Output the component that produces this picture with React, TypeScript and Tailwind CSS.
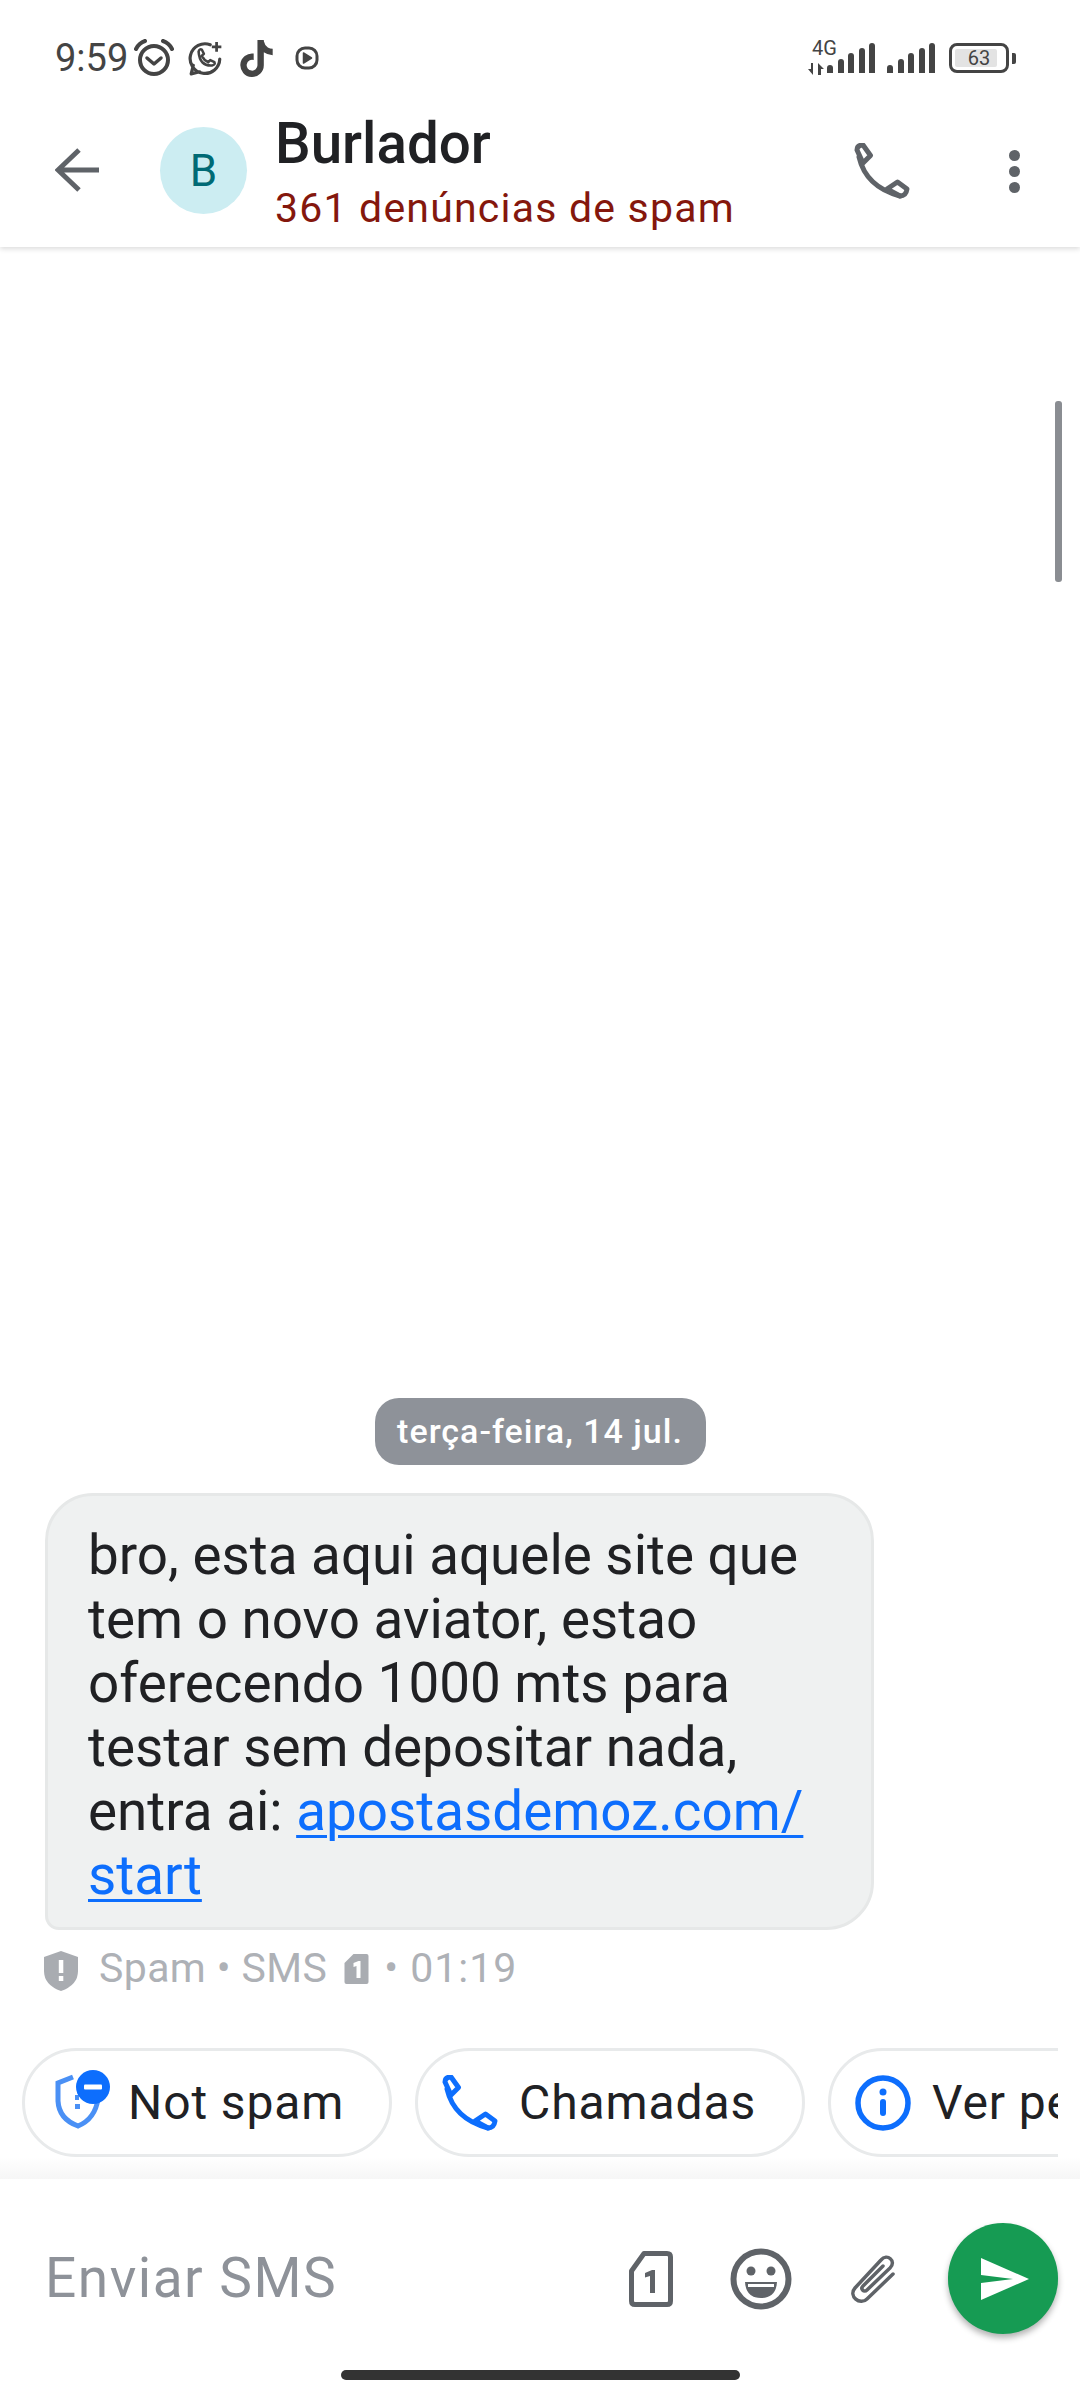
import React from "react";
import { FaTiktok } from "react-icons/fa6";

function Handset({ color, className }: { color: string; className: string }) {
  return (
    <svg viewBox="0 0 56 56" className={className} fill="none" stroke={color} strokeWidth="5" strokeLinejoin="round" strokeLinecap="round">
      <path d="M3 7Q3 2 9 2L16.5 12.5L9 20Z" />
      <path d="M5 14Q12 44 46 53" />
      <path d="M33 46L43.5 39L53 46Q52 53 46 53Z" />
    </svg>
  );
}

function StatusIcons() {
  return (
    <div className="flex items-center">
      <svg viewBox="0 0 40 38" className="w-[40px] h-[38px] ml-[6px] shrink-0" fill="none" stroke="#444" strokeWidth="4">
        <circle cx="20" cy="21" r="14" />
        <path d="M13 19l7 6 7-6" strokeWidth="3.5" strokeLinecap="round" strokeLinejoin="round" />
        <path d="M2 10Q5 4 11 2M38 10Q35 4 29 2" strokeLinecap="round" />
      </svg>
      <svg viewBox="0 0 34 34" className="w-[36px] h-[36px] ml-[14px] shrink-0" fill="none" stroke="#444" strokeWidth="3">
        <path d="M21 4.5A14 14 0 1 0 30 18M3 32l2-8M3 32l8-2" strokeLinecap="round" />
        <path d="M10 11q1-3 3-2l2 4-2 2q2 4 6 6l2-2 4 2q1 2-2 3-12 1-13-13Z" strokeWidth="2.4" strokeLinejoin="round" />
        <path d="M27 2v9M22.500 6.500h9" strokeWidth="2.600" />
      </svg>
      <FaTiktok className="w-[33px] h-[37px] ml-[16px] text-[#444] shrink-0" />
      <svg viewBox="0 0 24 24" className="w-[24px] h-[26px] ml-[22px] shrink-0" fill="none" stroke="#444" strokeWidth="3">
        <rect x="2" y="2" width="20" height="20" rx="8" />
        <path d="M8.500 7l8 5-8 5Z" fill="#444" strokeWidth="1.500" strokeLinejoin="round" />
      </svg>
    </div>
  );
}

function Bars({ heights }: { heights: number[] }) {
  return (
    <div className="flex items-end gap-[4.5px] h-[30px]">
      {heights.map((h, i) => (
        <div key={i} className="w-[6px] bg-[#444] rounded-t-[3px]" style={{ height: h }} />
      ))}
    </div>
  );
}

function Chip({ icon, label, className }: { icon: React.ReactNode; label: string; className: string }) {
  return (
    <div className={"shrink-0 h-[109px] rounded-full border-[3px] border-[#e8eaeb] flex items-center text-[48px] text-[#202124] tracking-[0.9px] " + className}>
      {icon}
      <span className="whitespace-nowrap">{label}</span>
    </div>
  );
}

export default function App() {
  return (
    <div className="relative w-[1080px] h-[2400px] bg-white overflow-hidden flex flex-col font-['Roboto',sans-serif]">
      <header className="h-[247px] shrink-0 flex flex-col bg-white shadow-[0_2px_5px_rgba(0,0,0,0.14)] z-10">
        <div className="h-[76px] pt-[40px] pl-[55px] pr-[64px] flex items-center justify-between">
          <div className="flex items-center">
            <span className="text-[38px] text-[#444] leading-none">9:59</span>
            <StatusIcons />
          </div>
          <div className="flex items-center">
            <div className="relative w-[19px] h-[34px] self-end">
              <span className="absolute left-[4px] -top-[3px] text-[20px] leading-none text-[#444]">4G</span>
              <svg viewBox="0 0 18 12" className="absolute left-0 bottom-0 w-[18px] h-[12px]" fill="#444">
                <path d="M0 6h3V0h2v12ZM10 12V0l6 6h-3v6Z" />
              </svg>
            </div>
            <Bars heights={[8, 14, 20, 25, 30]} />
            <div className="w-[12px]" />
            <Bars heights={[8, 14, 20, 25, 30]} />
            <div className="ml-[14px] w-[60px] h-[30px] rounded-[8px] border-[3px] border-[#444] p-[3px] relative">
              <div className="h-full w-[42px] bg-[#e3e3e3] rounded-[2px]" />
              <span className="absolute inset-0 flex items-center justify-center text-[20px] text-[#444] leading-none">63</span>
            </div>
            <div className="ml-[3px] w-[4px] h-[11px] bg-[#444] rounded-r-[2px]" />
          </div>
        </div>
        <div className="flex-1 flex items-start pl-[55px] pr-[60px] relative">
          <svg viewBox="0 0 44 44" className="w-[44px] h-[44px] mt-[72px] shrink-0" fill="none" stroke="#5f6368" strokeWidth="5">
            <path d="M44 22H4M24 2L3 22l21 20" />
          </svg>
          <div className="ml-[61px] mt-[51px] w-[87px] h-[87px] shrink-0 rounded-full bg-[#ccedf2] flex items-center justify-center text-[44px] text-[#006a75]">B</div>
          <div className="ml-[28px] flex flex-col">
            <span className="text-[56.5px] leading-[58px] mt-[39px] font-medium text-[#202124]">Burlador</span>
            <span className="text-[41px] leading-[46px] mt-[12px] text-[#84170d] tracking-[1.2px] whitespace-nowrap">361 denúncias de spam</span>
          </div>
          <div className="ml-auto flex items-center mt-[67px]">
            <Handset color="#5f6368" className="w-[56px] h-[56px] shrink-0" />
            <div className="ml-[99px] flex flex-col gap-[5px]">
              <div className="w-[11px] h-[11px] rounded-full bg-[#5f6368]" />
              <div className="w-[11px] h-[11px] rounded-full bg-[#5f6368]" />
              <div className="w-[11px] h-[11px] rounded-full bg-[#5f6368]" />
            </div>
          </div>
        </div>
      </header>

      <main className="flex-1 flex flex-col justify-end">
        <div className="self-center h-[67px] w-[331px] rounded-[24px] bg-[#8e9299] flex items-center justify-center text-[34px] font-medium text-white tracking-[1px] whitespace-nowrap">
          terça-feira, 14 jul.
        </div>
        <div className="mt-[28px] ml-[45px] w-[829px] h-[437px] rounded-[48px] rounded-bl-[14px] border-[3px] border-[#e6e8e8] bg-[#eff1f1] pl-[40px] pt-[27px] text-[54.8px] leading-[64px] text-[#202124] whitespace-nowrap">
          bro, esta aqui aquele site que<br />
          tem o novo aviator, estao<br />
          oferecendo 1000 mts para<br />
          testar sem depositar nada,<br />
          entra ai: <span className="text-[#0d6efd] underline decoration-[3px] underline-offset-[5px]">apostasdemoz.com/</span><br />
          <span className="text-[#0d6efd] underline decoration-[3px] underline-offset-[5px]">start</span>
        </div>
        <div className="mt-[21px] ml-[44px] h-[40px] flex items-center text-[41px] text-[#aeb1b6] tracking-[0.4px]">
          <svg viewBox="0 0 34 40" className="w-[34px] h-[40px] shrink-0">
            <path d="M17 0L34 6V20Q34 34 17 40Q0 34 0 20V6Z" fill="#a9acb1" />
            <rect x="14.800" y="9" width="4.500" height="13" fill="#fff" />
            <rect x="14.800" y="25" width="4.500" height="5" fill="#fff" />
          </svg>
          <span className="ml-[21px] pb-[5px]">Spam • SMS</span>
          <svg viewBox="0 0 24 30" className="w-[25px] h-[30px] ml-[17px] mb-[5px] shrink-0">
            <path d="M9 0H22Q24 0 24 2V28Q24 30 22 30H2Q0 30 0 28V9Z" fill="#a9acb1" />
            <path d="M9 9l5-2h2v17h-4V12l-3 1Z" fill="#fff" />
          </svg>
          <span className="ml-[15px] pb-[5px] tracking-[1px]">• 01:19</span>
        </div>
        <div className="mt-[57px] ml-[22px] w-[1036px] overflow-hidden flex gap-[23px]">
          <Chip
            className="w-[370px] pl-[30px]"
            label="Not spam"
            icon={
              <svg viewBox="0 0 56 60" className="w-[56px] h-[60px] mr-[17px] -mt-[6px] shrink-0" fill="none">
                <path d="M18 7L3 13V31Q4 49 23 56Q40 49 43 29" stroke="#4a90f5" strokeWidth="5" />
                <rect x="20" y="34" width="5" height="5" fill="#4a90f5" />
                <rect x="20" y="25" width="4" height="5" fill="#4a90f5" />
                <circle cx="38" cy="17" r="17" fill="#0d6efd" />
                <rect x="29" y="14.500" width="18" height="5" rx="1" fill="#fff" />
              </svg>
            }
          />
          <Chip
            className="w-[390px] pl-[24px]"
            label="Chamadas"
            icon={<Handset color="#0d6efd" className="w-[56px] h-[56px] mr-[21px] shrink-0" />}
          />
          <Chip
            className="w-[340px] pl-[24px]"
            label="Ver perfil"
            icon={
              <svg viewBox="0 0 56 56" className="w-[56px] h-[56px] mr-[21px] shrink-0" fill="none">
                <circle cx="28" cy="28" r="25" stroke="#0d6efd" strokeWidth="5.500" />
                <circle cx="28" cy="17" r="3.500" fill="#0d6efd" />
                <rect x="25" y="24" width="6" height="17" rx="3" fill="#0d6efd" />
              </svg>
            }
          />
        </div>
        <div className="h-[22px] mt-0 bg-gradient-to-b from-[#ffffff] to-[#f6f6f6]" />
      </main>

      <footer className="h-[221px] shrink-0 bg-white relative">
        <div className="h-[198px] pl-[45px] flex items-start">
          <span className="text-[55px] leading-[58px] mt-[70px] text-[#8e9299] tracking-[1.5px]">Enviar SMS</span>
          <div className="ml-auto flex items-start pr-[22px] pt-[44px]">
            <svg viewBox="0 0 44 56" className="w-[44px] h-[56px] mt-[28px] shrink-0" fill="none">
              <path d="M15 2.500H38Q41.500 2.500 41.500 6V50Q41.500 53.500 38 53.500H6Q2.500 53.500 2.500 50V20Z" stroke="#5f6368" strokeWidth="5" strokeLinejoin="round" />
              <path d="M16 22l7-3h3v23h-5V25l-5 1.500Z" fill="#5f6368" />
            </svg>
            <svg viewBox="0 0 62 62" className="w-[62px] h-[62px] ml-[57px] mt-[25px] shrink-0" fill="none">
              <circle cx="31" cy="31" r="27.500" stroke="#5f6368" strokeWidth="6" />
              <circle cx="21" cy="23" r="4.500" fill="#5f6368" />
              <circle cx="41" cy="23" r="4.500" fill="#5f6368" />
              <path d="M15 34H47Q46 50 31 50Q16 50 15 34Z" fill="#5f6368" />
              <rect x="18" y="36" width="26" height="3" fill="#fff" />
            </svg>
            <svg viewBox="0 0 48 54" className="w-[48px] h-[54px] ml-[55px] mt-[30px] shrink-0" fill="none" stroke="#5f6368" strokeWidth="3.500" strokeLinecap="round" strokeLinejoin="round">
              <path d="M46 21L20 46C13 53 1 43 8 35L34 7C40 0 50 8 43 15L20 37C17 40 13 36 16 33L36 13" />
            </svg>
            <div className="ml-[53px] w-[110px] h-[111px] shrink-0 rounded-full bg-[#169b53] shadow-[0_4px_6px_rgba(0,0,0,0.3)] flex items-center justify-center">
              <svg viewBox="0 0 48 42" className="w-[48px] h-[42px] ml-[3px]" fill="#fff">
                <path d="M0 0L48 21L0 42V25L32 21L0 17Z" />
              </svg>
            </div>
          </div>
        </div>
        <div className="mx-auto mt-[-7px] w-[399px] h-[10px] rounded-full bg-[#333]" />
      </footer>

      <div className="absolute left-[1055px] top-[401px] w-[7px] h-[181px] rounded-[3px] bg-[#8a8d92]" />
    </div>
  );
}
